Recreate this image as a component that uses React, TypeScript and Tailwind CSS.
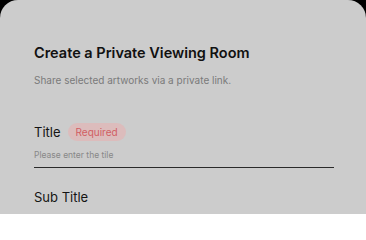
export default function App() {
  return (
    <div className="h-[214px] w-[366px] overflow-hidden bg-black" style={{ fontFamily: "Inter, 'Noto Sans', sans-serif" }}>
      <div className="h-full rounded-t-[18px] bg-[#cccccc] px-[34px] pt-[43px]">
        <h1 className="text-[14.5px] font-semibold leading-[20px] text-[#111111]">Create a Private Viewing Room</h1>
        <p className="mt-[10px] text-[10px] leading-[14px] text-[#7a7a7a]">Share selected artworks via a private link.</p>

        <div className="mt-[36px] mr-[-2px]">
          <div className="flex items-center gap-[7px]">
            <span className="text-[13px] leading-[18px] text-[#141414]">Title</span>
            <span className="rounded-full bg-[#dcbcbc] px-[8px] py-[2px] text-[10px] leading-[14px] text-[#d15e63]">Required</span>
          </div>
          <div className="mt-[9px] border-b border-[#2a2a2a] pb-[6px] text-[8.5px] leading-[11px] text-[#888888]">Please enter the tile</div>
        </div>

        <div className="mt-[20px] text-[13px] leading-[18px] text-[#141414]">Sub Title</div>
      </div>
    </div>
  );
}
